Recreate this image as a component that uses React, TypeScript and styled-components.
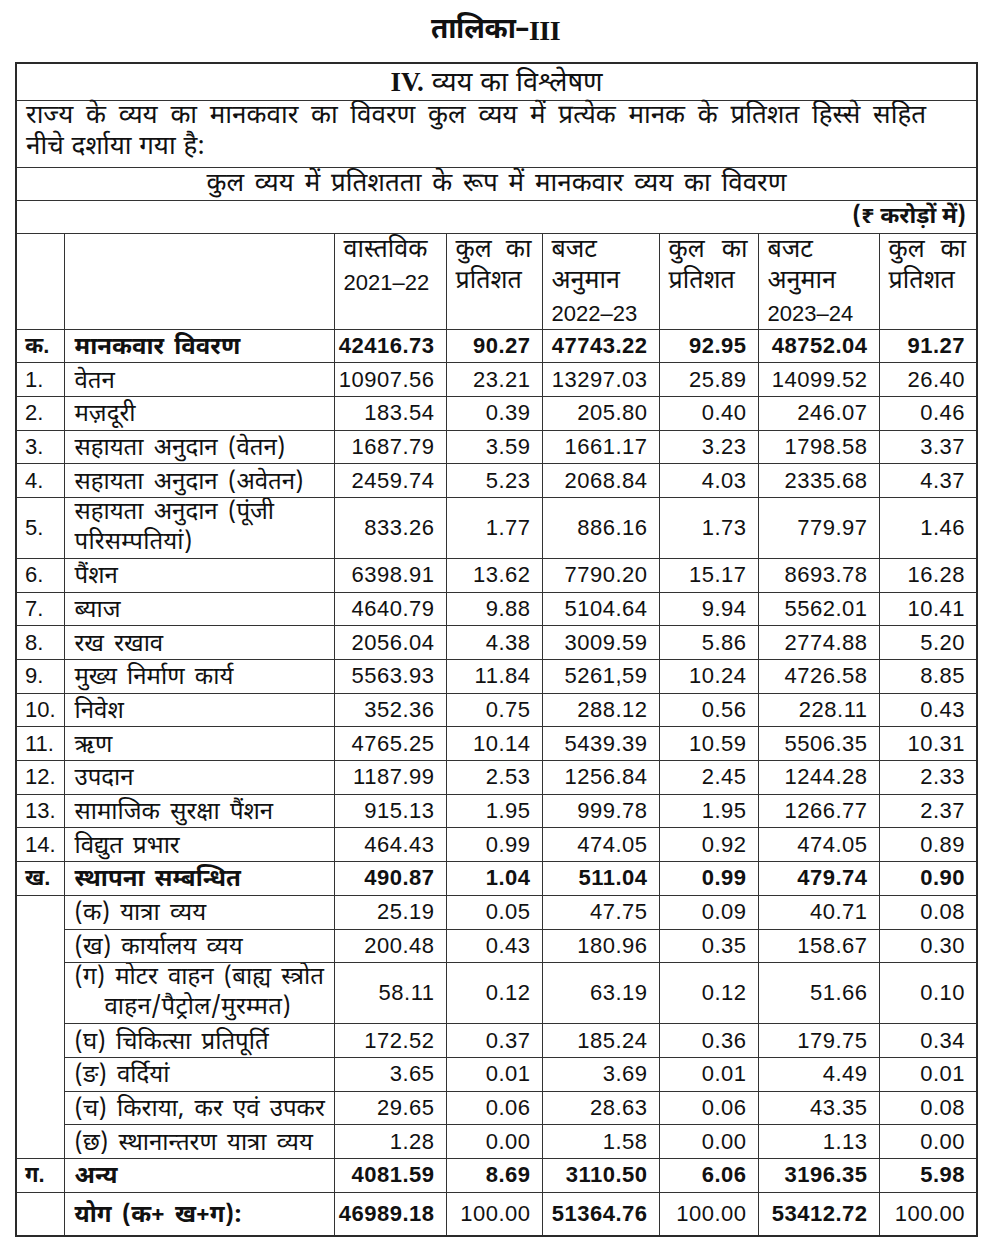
import styled, { createGlobalStyle } from 'styled-components'

const GlobalStyle = createGlobalStyle`
  body {
    margin: 0;
    background: #fff;
    color: #111;
    font-family: 'Noto Sans Devanagari', 'Lohit Devanagari', 'Noto Sans', 'Liberation Sans', sans-serif;
  }
`

type Row = {
    no?: string
    label: string
    second?: string
    v: string[]
    bold?: boolean
    size?: 'normal' | 'tall' | 'total'
    sub?: boolean
}

const rows: Row[] = [
    { no: 'क.', label: 'मानकवार विवरण', v: ['42416.73', '90.27', '47743.22', '92.95', '48752.04', '91.27'], bold: true },
    { no: '1.', label: 'वेतन', v: ['10907.56', '23.21', '13297.03', '25.89', '14099.52', '26.40'] },
    { no: '2.', label: 'मज़दूरी', v: ['183.54', '0.39', '205.80', '0.40', '246.07', '0.46'] },
    { no: '3.', label: 'सहायता अनुदान (वेतन)', v: ['1687.79', '3.59', '1661.17', '3.23', '1798.58', '3.37'] },
    { no: '4.', label: 'सहायता अनुदान (अवेतन)', v: ['2459.74', '5.23', '2068.84', '4.03', '2335.68', '4.37'] },
    { no: '5.', label: 'सहायता अनुदान (पूंजी', second: 'परिसम्पतियां)', v: ['833.26', '1.77', '886.16', '1.73', '779.97', '1.46'], size: 'tall' },
    { no: '6.', label: 'पैंशन', v: ['6398.91', '13.62', '7790.20', '15.17', '8693.78', '16.28'] },
    { no: '7.', label: 'ब्याज', v: ['4640.79', '9.88', '5104.64', '9.94', '5562.01', '10.41'] },
    { no: '8.', label: 'रख रखाव', v: ['2056.04', '4.38', '3009.59', '5.86', '2774.88', '5.20'] },
    { no: '9.', label: 'मुख्य निर्माण कार्य', v: ['5563.93', '11.84', '5261,59', '10.24', '4726.58', '8.85'] },
    { no: '10.', label: 'निवेश', v: ['352.36', '0.75', '288.12', '0.56', '228.11', '0.43'] },
    { no: '11.', label: 'ऋण', v: ['4765.25', '10.14', '5439.39', '10.59', '5506.35', '10.31'] },
    { no: '12.', label: 'उपदान', v: ['1187.99', '2.53', '1256.84', '2.45', '1244.28', '2.33'] },
    { no: '13.', label: 'सामाजिक सुरक्षा पैंशन', v: ['915.13', '1.95', '999.78', '1.95', '1266.77', '2.37'] },
    { no: '14.', label: 'विद्युत प्रभार', v: ['464.43', '0.99', '474.05', '0.92', '474.05', '0.89'] },
    { no: 'ख.', label: 'स्थापना सम्बन्धित', v: ['490.87', '1.04', '511.04', '0.99', '479.74', '0.90'], bold: true },
    { label: '(क) यात्रा व्यय', v: ['25.19', '0.05', '47.75', '0.09', '40.71', '0.08'], sub: true },
    { label: '(ख) कार्यालय व्यय', v: ['200.48', '0.43', '180.96', '0.35', '158.67', '0.30'], sub: true },
    { label: '(ग) मोटर वाहन (बाह्य स्त्रोत', second: 'वाहन/पैट्रोल/मुरम्मत)', v: ['58.11', '0.12', '63.19', '0.12', '51.66', '0.10'], sub: true, size: 'tall' },
    { label: '(घ) चिकित्सा प्रतिपूर्ति', v: ['172.52', '0.37', '185.24', '0.36', '179.75', '0.34'], sub: true },
    { label: '(ङ) वर्दियां', v: ['3.65', '0.01', '3.69', '0.01', '4.49', '0.01'], sub: true },
    { label: '(च) किराया, कर एवं उपकर', v: ['29.65', '0.06', '28.63', '0.06', '43.35', '0.08'], sub: true },
    { label: '(छ) स्थानान्तरण यात्रा व्यय', v: ['1.28', '0.00', '1.58', '0.00', '1.13', '0.00'], sub: true },
    { no: 'ग.', label: 'अन्य', v: ['4081.59', '8.69', '3110.50', '6.06', '3196.35', '5.98'], bold: true },
    { no: '', label: 'योग (क+ ख+ग):', v: ['46989.18', '100.00', '51364.76', '100.00', '53412.72', '100.00'], bold: true, size: 'total' },
]

const heads: { lines: string[]; spread?: boolean }[] = [
    { lines: ['वास्तविक', '2021–22'] },
    { lines: ['कुल का', 'प्रतिशत'], spread: true },
    { lines: ['बजट', 'अनुमान', '2022–23'] },
    { lines: ['कुल का', 'प्रतिशत'], spread: true },
    { lines: ['बजट', 'अनुमान', '2023–24'] },
    { lines: ['कुल का', 'प्रतिशत'], spread: true },
]

const widths = [48, 270, 112, 96, 117, 99, 121, 98]
const heights = { normal: 33.7, tall: 61, total: 44 }

export default function App() {
    const subCount = rows.filter((r) => r.sub).length
    let subStarted = false

    return (
        <Page>
            <GlobalStyle />
            <Title>
                तालिका–<Roman>III</Roman>
            </Title>
            <Table>
                <colgroup>
                    {widths.map((w, i) => (
                        <col key={i} style={{ width: w }} />
                    ))}
                </colgroup>
                <tbody>
                    <Row $h={37}>
                        <Banner colSpan={8}>
                            <Roman>IV.</Roman> व्यय का विश्लेषण
                        </Banner>
                    </Row>
                    <Row $h={67}>
                        <Intro colSpan={8}>
                            <JustLine>
                                राज्य के व्यय का मानकवार का विवरण कुल व्यय में प्रत्येक मानक के प्रतिशत हिस्से सहित
                            </JustLine>
                            <div>नीचे दर्शाया गया है:</div>
                        </Intro>
                    </Row>
                    <Row $h={33}>
                        <Banner colSpan={8} $light>
                            कुल व्यय में प्रतिशतता के रूप में मानकवार व्यय का विवरण
                        </Banner>
                    </Row>
                    <Row $h={33}>
                        <Units colSpan={8}>(₹ करोड़ों में)</Units>
                    </Row>
                    <Row $h={95}>
                        <HeadCell />
                        <HeadCell />
                        {heads.map((h, i) => (
                            <HeadCell key={i}>
                                {h.lines.map((l, j) => (
                                    <HeadLine key={j} $spread={!!h.spread && j === 0} $latin={/^\d/.test(l)}>
                                        {h.spread && j === 0
                                            ? l.split(' ').map((w) => <span key={w}>{w}</span>)
                                            : l}
                                    </HeadLine>
                                ))}
                            </HeadCell>
                        ))}
                    </Row>
                    {rows.map((r, i) => {
                        let first = null
                        if (r.sub) {
                            if (!subStarted) {
                                subStarted = true
                                first = <NoCell rowSpan={subCount} />
                            }
                        } else {
                            first = <NoCell $bold={r.bold}>{r.no}</NoCell>
                        }
                        return (
                            <Row key={i} $h={heights[r.size ?? 'normal']}>
                                {first}
                                <LabelCell $bold={r.bold} $two={!!r.second}>
                                    {r.label}
                                    {r.second && <Second $sub={r.sub}>{r.second}</Second>}
                                </LabelCell>
                                {r.v.map((v, j) => (
                                    <NumCell key={j} $bold={!!r.bold && (r.size !== 'total' || j % 2 === 0)}>
                                        {v}
                                    </NumCell>
                                ))}
                            </Row>
                        )
                    })}
                </tbody>
            </Table>
        </Page>
    )
}

// Styled component
const Page = styled.div`
    padding: 0 10px 20px 15px;
`

const Title = styled.h1`
    margin: 0;
    height: 62px;
    display: flex;
    align-items: center;
    justify-content: center;
    font-size: 28px;
    font-weight: 700;
    letter-spacing: -0.5px;
`

const Roman = styled.span`
    font-family: 'Liberation Serif', serif;
    font-weight: 700;
`

const Table = styled.table`
    width: 961px;
    table-layout: fixed;
    border-collapse: collapse;
    border: 2px solid #2a2a2a;
    font-size: 24px;

    td {
        border: 1.5px solid #333;
        padding: 0;
        line-height: 26px;
    }
`

const Row = styled.tr<{ $h: number }>`
    height: ${(p) => p.$h}px;
`

const Banner = styled.td<{ $light?: boolean }>`
    text-align: center;
    font-size: ${(p) => (p.$light ? 26 : 27)}px;
    word-spacing: ${(p) => (p.$light ? 4 : 1)}px;
    font-weight: 400;
    padding-top: 3px !important;
`

const Intro = styled.td`
    padding: 1px 50px 2px 9px !important;
    font-size: 26px;
    line-height: 31px !important;
    word-spacing: 1px;
`

const JustLine = styled.div`
    text-align: justify;
    text-align-last: justify;
`

const Units = styled.td`
    text-align: right;
    padding-right: 10px !important;
    font-weight: 700;
    font-size: 23px;
`

const HeadCell = styled.td`
    vertical-align: top;
    padding: 2px 10px 0 9px !important;
    line-height: 31px !important;
`

const HeadLine = styled.div<{ $spread: boolean; $latin: boolean }>`
    display: flex;
    justify-content: ${(p) => (p.$spread ? 'space-between' : 'flex-start')};
    white-space: nowrap;
    font-size: ${(p) => (p.$latin ? 22 : 25)}px;
    font-family: ${(p) => (p.$latin ? "'Liberation Sans', sans-serif" : "'Noto Sans Devanagari', sans-serif")};
`

const NoCell = styled.td<{ $bold?: boolean }>`
    padding-left: 8px !important;
    font-family: 'Liberation Sans', 'Noto Sans Devanagari', sans-serif;
    font-size: 22px;
    font-weight: ${(p) => (p.$bold ? 700 : 400)};
    vertical-align: middle;
`

const LabelCell = styled.td<{ $bold?: boolean; $two: boolean }>`
    padding: ${(p) => (p.$two ? 0 : 5)}px 4px 0 10px !important;
    font-size: 24px;
    font-weight: ${(p) => (p.$bold ? 700 : 400)};
    line-height: ${(p) => (p.$two ? 30 : 27)}px !important;
    word-spacing: 4px;
    white-space: nowrap;
    overflow: hidden;
`

const Second = styled.div<{ $sub?: boolean }>`
    padding-left: ${(p) => (p.$sub ? 30 : 0)}px;
    letter-spacing: 0.3px;
`

const NumCell = styled.td<{ $bold?: boolean }>`
    text-align: right;
    padding-right: 11px !important;
    font-family: 'Liberation Sans', Arial, sans-serif;
    font-size: 22px;
    letter-spacing: 0.5px;
    font-weight: ${(p) => (p.$bold ? 700 : 400)};
`
